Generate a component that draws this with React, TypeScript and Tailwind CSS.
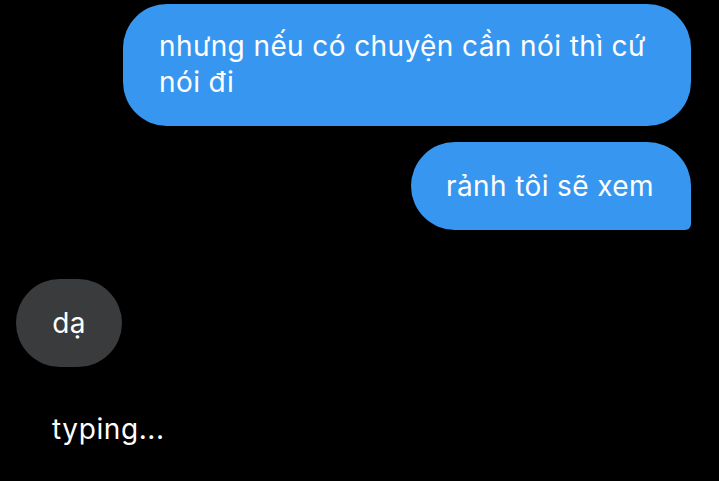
export default function App() {
  return (
    <div
      className="w-[719px] h-[481px] bg-black overflow-hidden flex flex-col text-white"
      style={{ fontFamily: 'Inter, "Noto Sans", sans-serif' }}
    >
      <div className="flex justify-end pr-[28px] pt-[4px]">
        <div className="w-[568px] h-[122px] bg-[#3797f0] rounded-[44px] pl-[36px] pr-[20px] pt-[24px] text-[28px] leading-[36px] tracking-[0.4px] whitespace-nowrap">
          nhưng nếu có chuyện cần nói thì cứ
          <br />
          nói đi
        </div>
      </div>
      <div className="flex justify-end pr-[28px] mt-[16px]">
        <div className="h-[88px] bg-[#3797f0] rounded-l-[44px] rounded-tr-[44px] rounded-br-[6px] pl-[35px] pr-[37px] flex items-center text-[28px] leading-[37px] tracking-[0.4px]">
          rảnh tôi sẽ xem
        </div>
      </div>
      <div className="flex pl-[16px] mt-[49px]">
        <div className="w-[106px] h-[88px] bg-[#3a3b3d] rounded-full flex items-center justify-center text-[28px] leading-[37px] tracking-[0.4px]">
          dạ
        </div>
      </div>
      <div className="pl-[52px] mt-[44px] text-[28px] leading-[37px] tracking-[0.6px]">typing...</div>
    </div>
  );
}
